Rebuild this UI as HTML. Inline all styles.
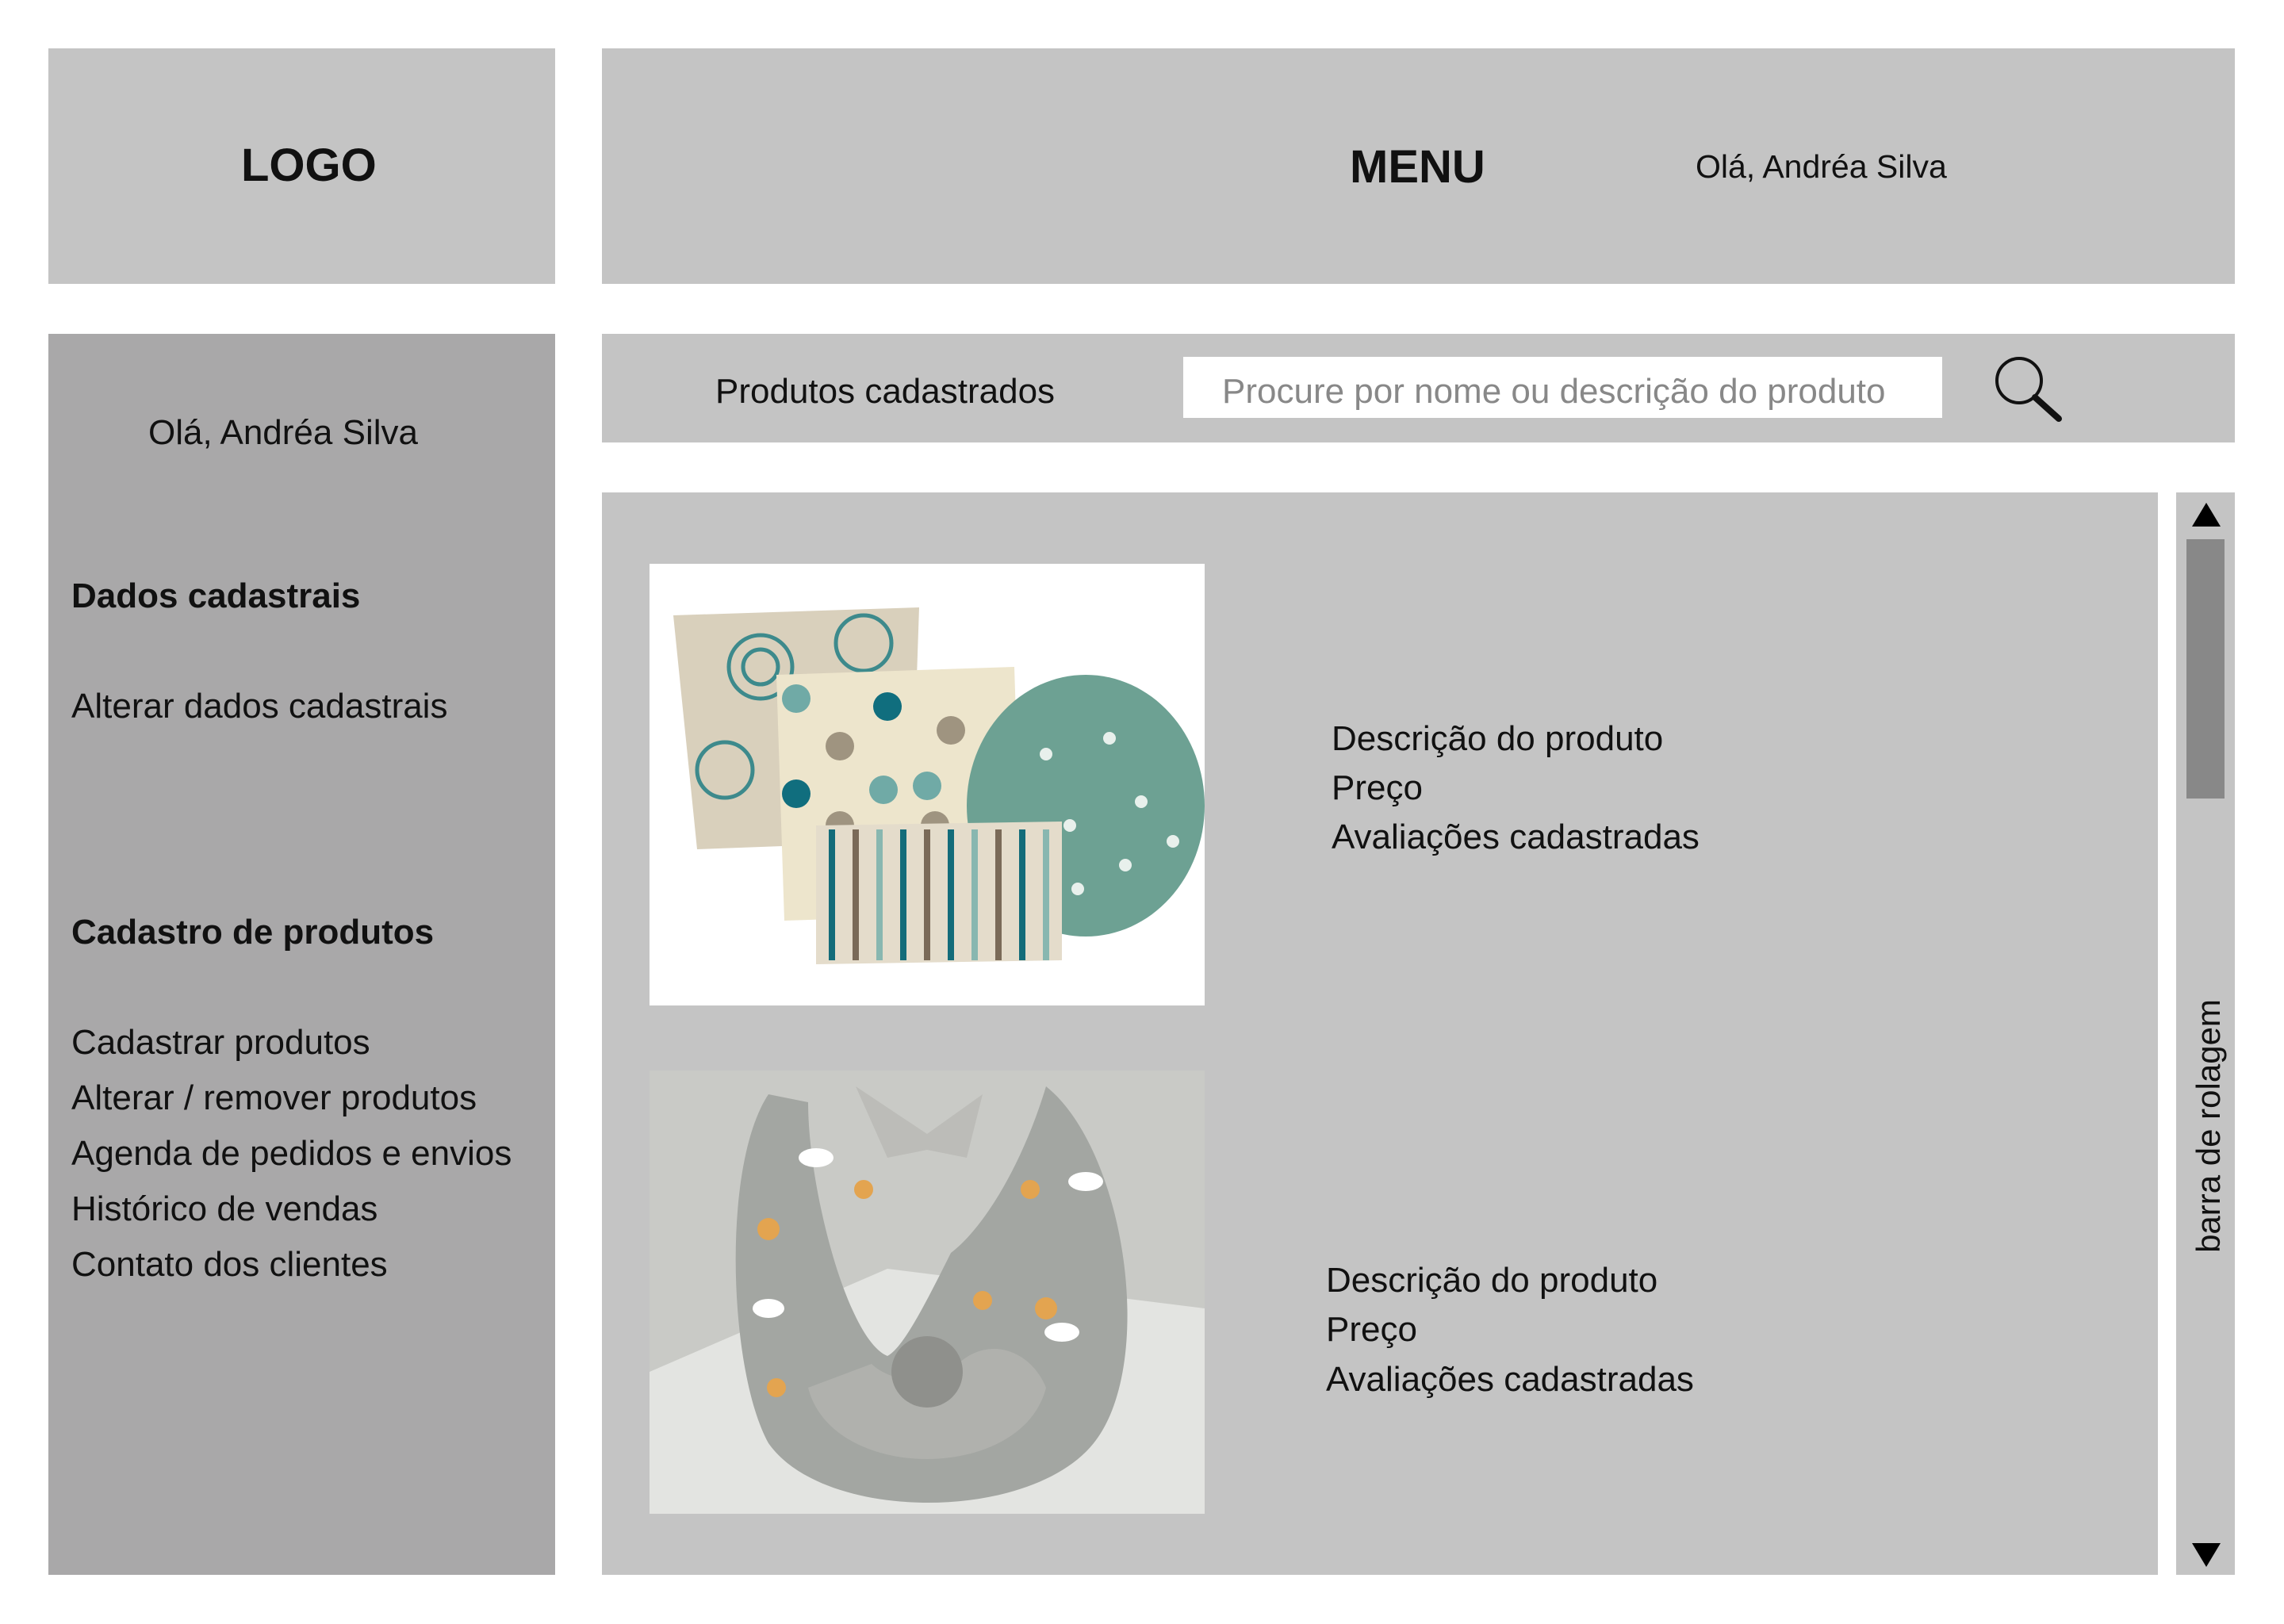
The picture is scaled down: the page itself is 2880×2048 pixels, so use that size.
<!DOCTYPE html>
<html><head><meta charset="utf-8"><style>
*{margin:0;padding:0;box-sizing:border-box}
body{width:2880px;height:2048px;background:#fff;position:relative;overflow:hidden;font-family:"Liberation Sans","DejaVu Sans",sans-serif;color:#111}
.b{position:absolute}
.t{position:absolute;white-space:nowrap;font-size:44px;line-height:1}
</style></head><body>
<div class="b" style="left:61px;top:61px;width:639px;height:297px;background:#c4c4c4"></div>
<div class="b" style="left:759px;top:61px;width:2059px;height:297px;background:#c4c4c4"></div>
<div class="t" style="left:304px;top:180px;font-size:58px;font-weight:bold">LOGO</div>
<div class="t" style="left:1702px;top:182px;font-size:58px;font-weight:bold">MENU</div>
<div class="t" style="left:2138px;top:190px;font-size:41px">Olá, Andréa Silva</div>

<div class="b" style="left:61px;top:421px;width:639px;height:1565px;background:#a9a8a9"></div>
<div class="t" style="left:187px;top:524px">Olá, Andréa Silva</div>
<div class="t" style="left:90px;top:730px;font-weight:bold">Dados cadastrais</div>
<div class="t" style="left:90px;top:869px">Alterar dados cadastrais</div>
<div class="t" style="left:90px;top:1154px;font-weight:bold">Cadastro de produtos</div>
<div class="t" style="left:90px;top:1293px">Cadastrar produtos</div>
<div class="t" style="left:90px;top:1363px">Alterar / remover produtos</div>
<div class="t" style="left:90px;top:1433px">Agenda de pedidos e envios</div>
<div class="t" style="left:90px;top:1503px">Histórico de vendas</div>
<div class="t" style="left:90px;top:1573px">Contato dos clientes</div>

<div class="b" style="left:759px;top:421px;width:2059px;height:137px;background:#c4c4c4"></div>
<div class="t" style="left:902px;top:472px">Produtos cadastrados</div>
<div class="b" style="left:1492px;top:450px;width:957px;height:77px;background:#fff"></div>
<div class="t" style="left:1541px;top:472px;color:#888">Procure por nome ou descrição do produto</div>
<svg class="b" style="left:2510px;top:444px" width="96" height="92" viewBox="0 0 96 92"><circle cx="36" cy="36" r="28" fill="none" stroke="#111" stroke-width="4"/><line x1="56" y1="57" x2="86" y2="84" stroke="#111" stroke-width="8" stroke-linecap="round"/></svg>

<div class="b" style="left:759px;top:621px;width:1962px;height:1365px;background:#c4c4c4"></div>
<div class="b" style="left:2744px;top:621px;width:74px;height:1365px;background:#c4c4c4"></div>
<div class="b" style="left:2757px;top:680px;width:48px;height:327px;background:#888"></div>
<svg class="b" style="left:2762px;top:632px" width="40" height="34"><polygon points="20,2 38,32 2,32" fill="#000"/></svg>
<svg class="b" style="left:2762px;top:1944px" width="40" height="34"><polygon points="2,2 38,2 20,32" fill="#000"/></svg>
<div class="t" style="left:2785px;top:1420px;transform:translate(-50%,-50%) rotate(-90deg);font-size:42px">barra de rolagem</div>

<svg class="b" style="left:819px;top:711px" width="700" height="557" viewBox="0 0 700 557">
<rect width="700" height="557" fill="#fff"/>
<path d="M30 65 L340 55 L330 350 L60 360 Z" fill="#d9d0bc"/>
<g fill="none" stroke="#3d8a8c" stroke-width="5"><circle cx="140" cy="130" r="40"/><circle cx="140" cy="130" r="22"/><circle cx="270" cy="100" r="35"/><circle cx="95" cy="260" r="35"/></g>
<path d="M160 140 L460 130 L470 440 L170 450 Z" fill="#ede5cc"/>
<g fill="#9f9480"><circle cx="240" cy="230" r="18"/><circle cx="380" cy="210" r="18"/><circle cx="240" cy="330" r="18"/><circle cx="360" cy="330" r="18"/></g>
<g fill="#106e7e"><circle cx="300" cy="180" r="18"/><circle cx="185" cy="290" r="18"/></g>
<g fill="#70aaa6"><circle cx="185" cy="170" r="18"/><circle cx="350" cy="280" r="18"/><circle cx="295" cy="285" r="18"/></g>
<ellipse cx="550" cy="305" rx="150" ry="165" fill="#6da193"/>
<g fill="#e8f0ec"><circle cx="500" cy="240" r="8"/><circle cx="580" cy="220" r="8"/><circle cx="620" cy="300" r="8"/><circle cx="530" cy="330" r="8"/><circle cx="600" cy="380" r="8"/><circle cx="660" cy="350" r="8"/><circle cx="540" cy="410" r="8"/></g>
<path d="M210 330 L520 325 L520 500 L210 505 Z" fill="#e4dccb"/>
<g stroke-width="8"><line x1="230" y1="335" x2="230" y2="500" stroke="#136c7a"/><line x1="260" y1="335" x2="260" y2="500" stroke="#7a6a58"/><line x1="290" y1="335" x2="290" y2="500" stroke="#88b7b0"/><line x1="320" y1="335" x2="320" y2="500" stroke="#136c7a"/><line x1="350" y1="335" x2="350" y2="500" stroke="#7a6a58"/><line x1="380" y1="335" x2="380" y2="500" stroke="#136c7a"/><line x1="410" y1="335" x2="410" y2="500" stroke="#88b7b0"/><line x1="440" y1="335" x2="440" y2="500" stroke="#7a6a58"/><line x1="470" y1="335" x2="470" y2="500" stroke="#136c7a"/><line x1="500" y1="335" x2="500" y2="500" stroke="#88b7b0"/></g>
</svg>

<svg class="b" style="left:819px;top:1350px" width="700" height="559" viewBox="0 0 700 559">
<rect width="700" height="559" fill="#c9cac6"/>
<path d="M0 380 L300 250 L700 300 L700 559 L0 559 Z" fill="#e3e4e1"/>
<path d="M150 30 C90 120 100 380 150 470 C220 570 480 570 560 470 C640 370 600 100 500 20 C470 120 420 200 380 230 C350 290 320 350 300 360 C250 340 200 150 200 40 Z" fill="#a3a6a2"/>
<path d="M200 400 C230 520 470 520 500 400 C480 350 420 330 380 380 C350 400 300 390 280 370 Z" fill="#b0b1ad"/>
<circle cx="350" cy="380" r="45" fill="#8f908c"/>
<path d="M260 20 L350 80 L420 30 L400 110 L350 100 L300 110 Z" fill="#bcbcb8"/>
<g fill="#e3a450"><circle cx="150" cy="200" r="14"/><circle cx="270" cy="150" r="12"/><circle cx="480" cy="150" r="12"/><circle cx="500" cy="300" r="14"/><circle cx="160" cy="400" r="12"/><circle cx="420" cy="290" r="12"/></g>
<g fill="#fff"><ellipse cx="210" cy="110" rx="22" ry="12"/><ellipse cx="550" cy="140" rx="22" ry="12"/><ellipse cx="520" cy="330" rx="22" ry="12"/><ellipse cx="150" cy="300" rx="20" ry="12"/></g>
</svg>

<div class="t" style="left:1679px;top:910px">Descrição do produto</div>
<div class="t" style="left:1679px;top:972px">Preço</div>
<div class="t" style="left:1679px;top:1034px">Avaliações cadastradas</div>
<div class="t" style="left:1672px;top:1593px">Descrição do produto</div>
<div class="t" style="left:1672px;top:1655px">Preço</div>
<div class="t" style="left:1672px;top:1718px">Avaliações cadastradas</div>
</body></html>
